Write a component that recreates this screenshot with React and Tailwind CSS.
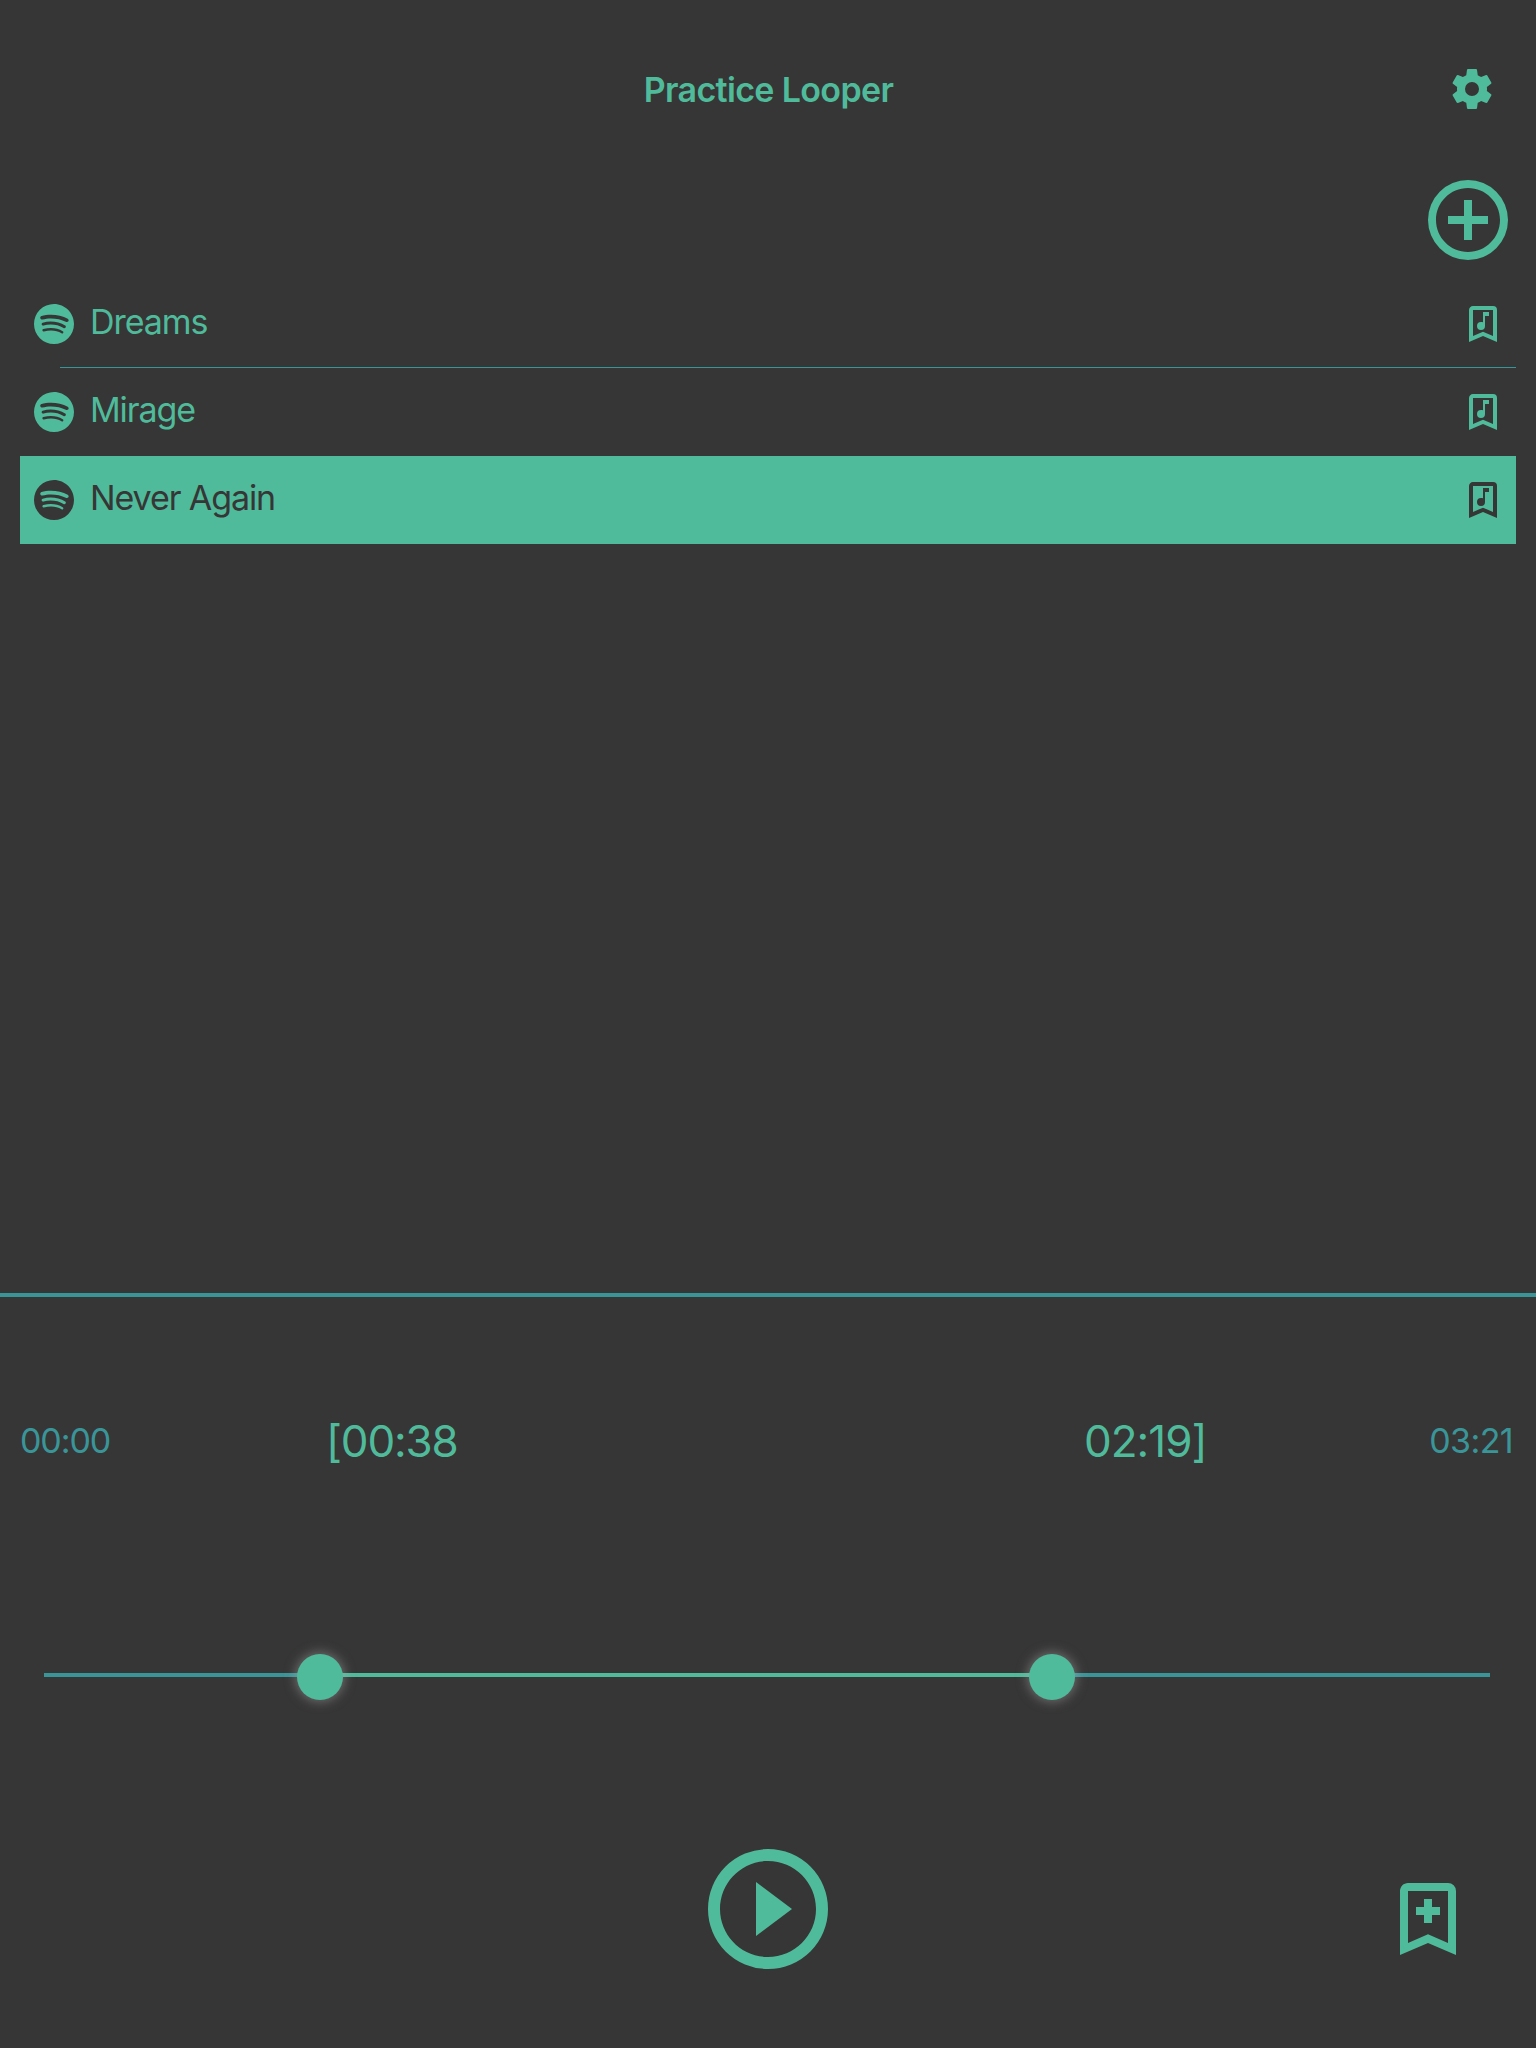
const COG =
  "M12,15.5A3.5,3.5 0 0,1 8.5,12A3.5,3.5 0 0,1 12,8.5A3.5,3.5 0 0,1 15.5,12A3.5,3.5 0 0,1 12,15.5M19.43,12.97C19.47,12.65 19.5,12.33 19.5,12C19.5,11.67 19.47,11.34 19.43,11L21.54,9.37C21.73,9.22 21.78,8.95 21.66,8.73L19.66,5.27C19.54,5.05 19.27,4.96 19.05,5.05L16.56,6.05C16.04,5.66 15.5,5.32 14.87,5.07L14.5,2.42C14.46,2.18 14.25,2 14,2H10C9.75,2 9.54,2.18 9.5,2.42L9.13,5.07C8.5,5.32 7.96,5.66 7.44,6.05L4.95,5.05C4.73,4.96 4.46,5.05 4.34,5.27L2.34,8.73C2.21,8.95 2.27,9.22 2.46,9.37L4.57,11C4.53,11.34 4.5,11.67 4.5,12C4.5,12.33 4.53,12.65 4.57,12.97L2.46,14.63C2.27,14.78 2.21,15.05 2.34,15.27L4.34,18.73C4.46,18.95 4.73,19.03 4.95,18.95L7.44,17.94C7.96,18.34 8.5,18.68 9.13,18.93L9.5,21.58C9.54,21.82 9.75,22 10,22H14C14.25,22 14.46,21.82 14.5,21.58L14.87,18.93C15.5,18.67 16.04,18.34 16.56,17.94L19.05,18.95C19.27,19.03 19.54,18.95 19.66,18.73L21.66,15.27C21.78,15.05 21.73,14.78 21.54,14.63L19.43,12.97Z";
const SPOTIFY =
  "M17.9,10.9C14.7,9 9.35,8.8 6.3,9.75C5.8,9.9 5.3,9.6 5.15,9.15C5,8.65 5.3,8.15 5.75,8C9.3,6.95 15.15,7.15 18.85,9.35C19.3,9.6 19.45,10.2 19.2,10.65C18.95,11 18.35,11.15 17.9,10.9M17.8,13.7C17.55,14.05 17.1,14.2 16.75,13.95C14.05,12.3 9.95,11.8 6.8,12.8C6.4,12.9 5.95,12.7 5.85,12.3C5.75,11.9 5.95,11.45 6.35,11.35C10,10.25 14.5,10.8 17.6,12.7C17.9,12.85 18.05,13.35 17.8,13.7M16.6,16.45C16.4,16.75 16.05,16.85 15.75,16.65C13.4,15.2 10.45,14.9 6.95,15.7C6.6,15.8 6.3,15.55 6.2,15.25C6.1,14.9 6.35,14.6 6.65,14.5C10.45,13.65 13.75,14 16.35,15.6C16.7,15.75 16.75,16.15 16.6,16.45M12,2A10,10 0 0,0 2,12A10,10 0 0,0 12,22A10,10 0 0,0 22,12C22,6.45 17.5,2 12,2Z";
const BOOKMARK = "M17,18V5H7V18L12,15.82L17,18M17,3A2,2 0 0,1 19,5V21L12,18L5,21V5C5,3.89 5.9,3 7,3H17";
const NOTE = "M11,11C11.35,11 11.69,11.07 12,11.18V6H15V8H13V13A2,2 0 1,1 11,11Z";
const PLUS_SMALL = "M11,7H13V9H15V11H13V13H11V11H9V9H11V7Z";
const PLUS_CIRCLE =
  "M12,20C7.59,20 4,16.41 4,12C4,7.59 7.59,4 12,4C16.41,4 20,7.59 20,12C20,16.41 16.41,20 12,20M12,2A10,10 0 0,0 2,12A10,10 0 0,0 12,22A10,10 0 0,0 22,12A10,10 0 0,0 12,2M13,7H11V11H7V13H11V17H13V13H17V11H13V7Z";
const PLAY_CIRCLE =
  "M12,20C7.59,20 4,16.41 4,12C4,7.59 7.59,4 12,4C16.41,4 20,7.59 20,12C20,16.41 16.41,20 12,20M12,2A10,10 0 0,0 2,12A10,10 0 0,0 12,22A10,10 0 0,0 22,12A10,10 0 0,0 12,2M10,16.5L16,12L10,7.5V16.5Z";

function Icon({ paths, className }) {
  return (
    <svg viewBox="0 0 24 24" fill="currentColor" className={`shrink-0 ${className}`}>
      {paths.map((d) => (
        <path key={d} d={d} />
      ))}
    </svg>
  );
}

const songs = [
  { title: "Dreams", tracking: "tracking-[-1.05px]", divider: true },
  { title: "Mirage", tracking: "tracking-[-1.1px]" },
  { title: "Never Again", tracking: "tracking-[-1.1px]", selected: true },
];

function Song({ title, tracking, divider, selected }) {
  return (
    <li className={`flex h-[88px] flex-col ${selected ? "bg-[#4fbb9b] text-[#363636]" : ""}`}>
      <div className="flex flex-1 items-center pr-[9.5px] pl-[10px]">
        <Icon paths={[SPOTIFY]} className="size-12" />
        <span className={`ml-3 flex-1 pb-1 text-[34px] leading-10 whitespace-nowrap ${tracking}`}>{title}</span>
        <Icon paths={[BOOKMARK, NOTE]} className="size-12" />
      </div>
      {divider && <div className="-mt-px ml-10 h-px bg-[#3a9599]" />}
    </li>
  );
}

function Thumb() {
  return <div className="z-10 -mx-[23px] mt-1 size-[46px] shrink-0 rounded-full bg-[#4fbb9b] shadow-[0_0_12px_1px_rgba(180,180,180,0.5)]" />;
}

export default function App() {
  return (
    <div className="flex h-[2048px] w-[1536px] flex-col overflow-hidden bg-[#363636] font-['Inter',sans-serif] text-[#4fbb9b]">
      <header className="grid h-[130px] grid-cols-[1fr_auto_1fr] items-start px-10">
        <span />
        <h1 className="mt-[70px] ml-px text-[34px] leading-10 font-semibold tracking-[-0.65px] whitespace-nowrap">Practice Looper</h1>
        <button className="mt-[65px] justify-self-end">
          <Icon paths={[COG]} className="block size-12" />
        </button>
      </header>
      <div className="flex h-[150px] justify-end pt-[42px] pr-5">
        <button className="size-24">
          <Icon paths={[PLUS_CIRCLE]} className="block size-24" />
        </button>
      </div>
      <ul className="mx-5 h-[1013px]">
        {songs.map((song) => (
          <Song key={song.title} {...song} />
        ))}
      </ul>
      <section className="flex flex-1 flex-col border-t-4 border-[#3a9599]">
        <div className="mt-[116px] flex h-[56px] items-center whitespace-nowrap">
          <span className="ml-5 w-[306px] pb-px text-[34px] tracking-[-1.1px] text-[#3a9599]">00:00</span>
          <span className="w-[758px] text-[44px] tracking-[-1.2px]">[00:38</span>
          <span className="flex-1 text-[44px] tracking-[-1px]">02:19]</span>
          <span className="mr-[23px] pb-px text-[34px] tracking-[-0.6px] text-[#3a9599]">03:21</span>
        </div>
        <div className="mt-[183px] ml-11 flex h-[46px] w-[1446px] items-center">
          <div className="h-1 w-[276px] bg-[#3a9599]" />
          <Thumb />
          <div className="h-1 w-[732px] bg-[#4fbb9b]" />
          <Thumb />
          <div className="h-1 flex-1 bg-[#3a9599]" />
        </div>
        <div className="mt-[139px] grid grid-cols-[1fr_auto_1fr] items-start">
          <span />
          <button>
            <Icon paths={[PLAY_CIRCLE]} className="block size-36" />
          </button>
          <button className="mt-[34px] mr-[60px] justify-self-end">
            <Icon paths={[BOOKMARK, PLUS_SMALL]} className="block size-24" />
          </button>
        </div>
      </section>
    </div>
  );
}
